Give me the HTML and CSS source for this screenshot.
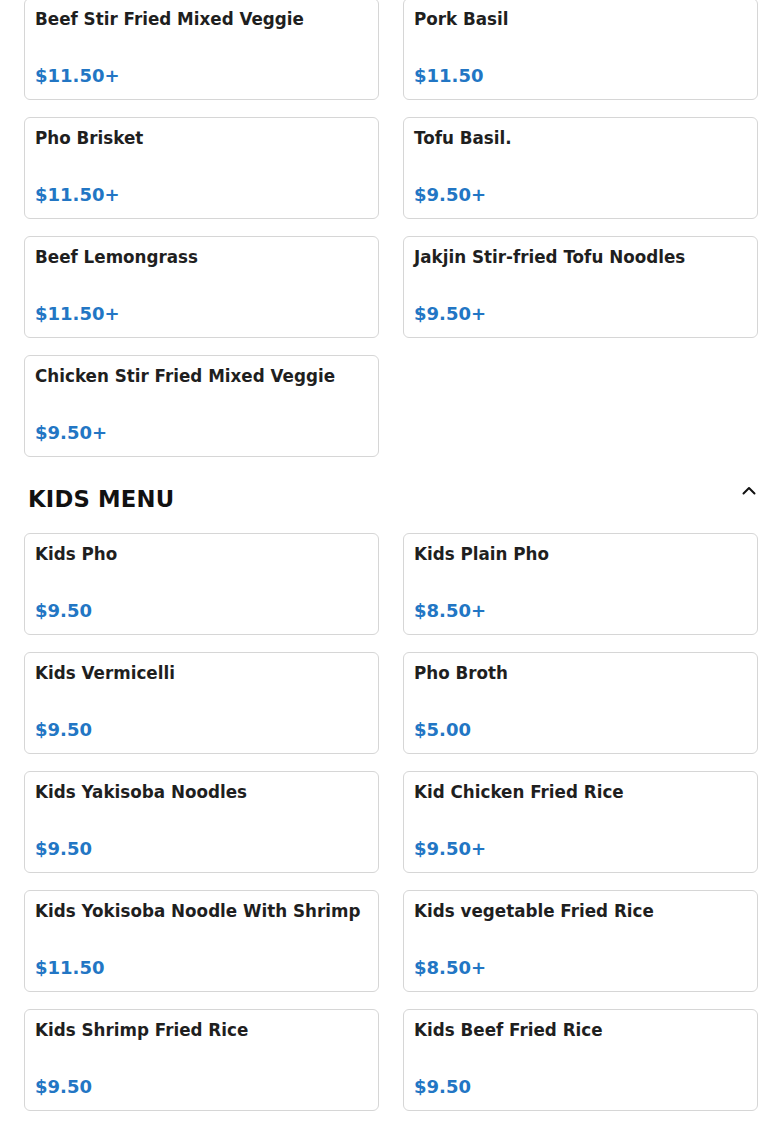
FILE: index.html
```html
<!DOCTYPE html>
<html lang="en">
<head>
<meta charset="utf-8">
<title>Menu</title>
<link rel="stylesheet" href="styles.css">
</head>
<body>
<div class="page">
  <div class="grid grid-first">
    <div class="card"><div class="name">Beef Stir Fried Mixed Veggie</div><div class="price">$11.50+</div></div>
    <div class="card"><div class="name">Pork Basil</div><div class="price">$11.50</div></div>
    <div class="card"><div class="name">Pho Brisket</div><div class="price">$11.50+</div></div>
    <div class="card"><div class="name">Tofu Basil.</div><div class="price">$9.50+</div></div>
    <div class="card"><div class="name">Beef Lemongrass</div><div class="price">$11.50+</div></div>
    <div class="card"><div class="name">Jakjin Stir-fried Tofu Noodles</div><div class="price">$9.50+</div></div>
    <div class="card"><div class="name">Chicken Stir Fried Mixed Veggie</div><div class="price">$9.50+</div></div>
  </div>

  <div class="section-head">
    <h2 class="section-title">KIDS MENU</h2>
    <svg class="chevron" width="14" height="9" viewBox="0 0 14 9" aria-hidden="true">
      <path d="M1.5 7.5 L7 2 L12.5 7.5" fill="none" stroke="#111" stroke-width="2" stroke-linecap="round" stroke-linejoin="round"/>
    </svg>
  </div>

  <div class="grid">
    <div class="card"><div class="name">Kids Pho</div><div class="price">$9.50</div></div>
    <div class="card"><div class="name">Kids Plain Pho</div><div class="price">$8.50+</div></div>
    <div class="card"><div class="name">Kids Vermicelli</div><div class="price">$9.50</div></div>
    <div class="card"><div class="name">Pho Broth</div><div class="price">$5.00</div></div>
    <div class="card"><div class="name">Kids Yakisoba Noodles</div><div class="price">$9.50</div></div>
    <div class="card"><div class="name">Kid Chicken Fried Rice</div><div class="price">$9.50+</div></div>
    <div class="card"><div class="name">Kids Yokisoba Noodle With Shrimp</div><div class="price">$11.50</div></div>
    <div class="card"><div class="name">Kids vegetable Fried Rice</div><div class="price">$8.50+</div></div>
    <div class="card"><div class="name">Kids Shrimp Fried Rice</div><div class="price">$9.50</div></div>
    <div class="card"><div class="name">Kids Beef Fried Rice</div><div class="price">$9.50</div></div>
  </div>
</div>
</body>
</html>
```
FILE: styles.css
```css
html, body {
  margin: 0;
  padding: 0;
  background: #ffffff;
}

body {
  font-family: "DejaVu Sans", "Liberation Sans", sans-serif;
  color: #1f1f1f;
  overflow: hidden;
}

.page {
  width: 754px;
  padding: 0 21px 0 24px;
  border-right: 1px solid #f1f1f1;
  min-height: 1124px;
}

.grid {
  display: grid;
  grid-template-columns: 1fr 1fr;
  column-gap: 24px;
  row-gap: 17px;
  width: 734px;
}

.grid-first {
  margin-top: -2px;
}

.card {
  border: 1px solid #d6d6d6;
  border-radius: 6px;
  padding: 10px 10px 12px;
  display: flex;
  flex-direction: column;
  background: #fff;
}

.name {
  font-size: 16.75px;
  font-weight: bold;
  line-height: 20px;
  color: #1f1f1f;
  margin-bottom: 36px;
  white-space: nowrap;
}

.price {
  font-size: 18px;
  font-weight: bold;
  line-height: 22px;
  color: #2276c4;
}

.section-head {
  display: flex;
  align-items: flex-start;
  justify-content: space-between;
  width: 734px;
  padding: 29px 0 20px;
}

.section-title {
  margin: 0 0 0 4px;
  font-size: 22.7px;
  font-weight: bold;
  line-height: 1.2;
  color: #111;
  letter-spacing: 0.2px;
}

.chevron {
  margin-top: 0;
  margin-right: 2px;
}
```
